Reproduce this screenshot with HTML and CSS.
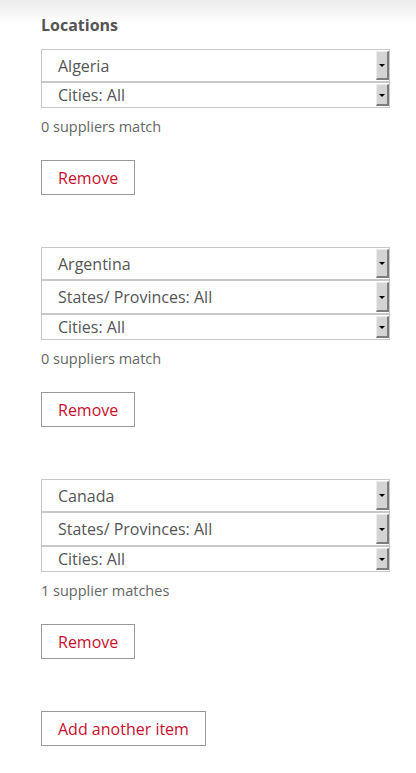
FILE: index.html
```html
<!DOCTYPE html>
<html>
<head>
<meta charset="utf-8">
<link rel="stylesheet" href="styles.css">
</head>
<body>
<div class="page">
  <h2 class="title">Locations</h2>

  <div class="group">
    <div class="selects">
      <div class="sel sel-lg"><span class="sel-text">Algeria</span><span class="arrow"></span></div>
      <div class="sel sel-sm"><span class="sel-text">Cities: All</span><span class="arrow"></span></div>
    </div>
    <p class="match">0 suppliers match</p>
    <button class="btn">Remove</button>
  </div>

  <div class="group">
    <div class="selects">
      <div class="sel sel-lg"><span class="sel-text">Argentina</span><span class="arrow"></span></div>
      <div class="sel sel-md"><span class="sel-text">States/ Provinces: All</span><span class="arrow"></span></div>
      <div class="sel sel-sm"><span class="sel-text">Cities: All</span><span class="arrow"></span></div>
    </div>
    <p class="match">0 suppliers match</p>
    <button class="btn">Remove</button>
  </div>

  <div class="group">
    <div class="selects">
      <div class="sel sel-lg"><span class="sel-text">Canada</span><span class="arrow"></span></div>
      <div class="sel sel-md"><span class="sel-text">States/ Provinces: All</span><span class="arrow"></span></div>
      <div class="sel sel-sm"><span class="sel-text">Cities: All</span><span class="arrow"></span></div>
    </div>
    <p class="match">1 supplier matches</p>
    <button class="btn">Remove</button>
  </div>

  <button class="btn">Add another item</button>
</div>
</body>
</html>
```
FILE: styles.css
```css
html, body {
  margin: 0;
  padding: 0;
}
body {
  background: #fff linear-gradient(#ececec 0, #ffffff 24px) no-repeat;
  font-family: "Open Sans", "Liberation Sans", sans-serif;
  color: #555;
}
.page {
  padding: 15px 26px 20px 41px;
  display: flex;
  flex-direction: column;
  align-items: flex-start;
}
.title {
  margin: 0;
  font-size: 16px;
  line-height: 20px;
  font-weight: 700;
  color: #555;
}
.group {
  margin-top: 14px;
  margin-bottom: 52px;
  align-self: stretch;
  display: flex;
  flex-direction: column;
  align-items: flex-start;
}
.group + .group {
  margin-top: 0;
}
.selects {
  align-self: stretch;
  display: flex;
  flex-direction: column;
}
.sel {
  box-sizing: border-box;
  border: 1px solid #c8c8c8;
  background: #fff;
  display: flex;
  align-items: stretch;
  justify-content: space-between;
  font-size: 16px;
  color: #555;
  padding: 1px 0;
}
.sel-lg {
  height: 33px;
}
.sel-md {
  height: 34px;
}
.sel-sm {
  height: 26px;
}
.sel-text {
  padding-left: 16px;
  display: flex;
  align-items: center;
}
.arrow {
  box-sizing: border-box;
  width: 13px;
  background: #d4d4d4;
  border-top: 1px solid #ececec;
  border-left: 1px solid #ececec;
  border-right: 2px solid #7c7c7c;
  border-bottom: 2px solid #7c7c7c;
  display: flex;
  align-items: center;
  justify-content: center;
}
.arrow::after {
  content: "";
  width: 0;
  height: 0;
  border-left: 3px solid transparent;
  border-right: 3px solid transparent;
  border-top: 3px solid #000;
  margin-top: 1px;
}
.match {
  margin: 10px 0 0 0;
  font-size: 14.5px;
  line-height: 18px;
  color: #666;
}
.btn {
  margin-top: 24px;
  box-sizing: border-box;
  height: 35px;
  padding: 0 16px;
  border: 1px solid #999;
  background: #fff;
  font-family: "Open Sans", "Liberation Sans", sans-serif;
  font-size: 16px;
  color: #c8102e;
  border-radius: 0;
}
.page > .btn {
  margin-top: 0;
}
```
